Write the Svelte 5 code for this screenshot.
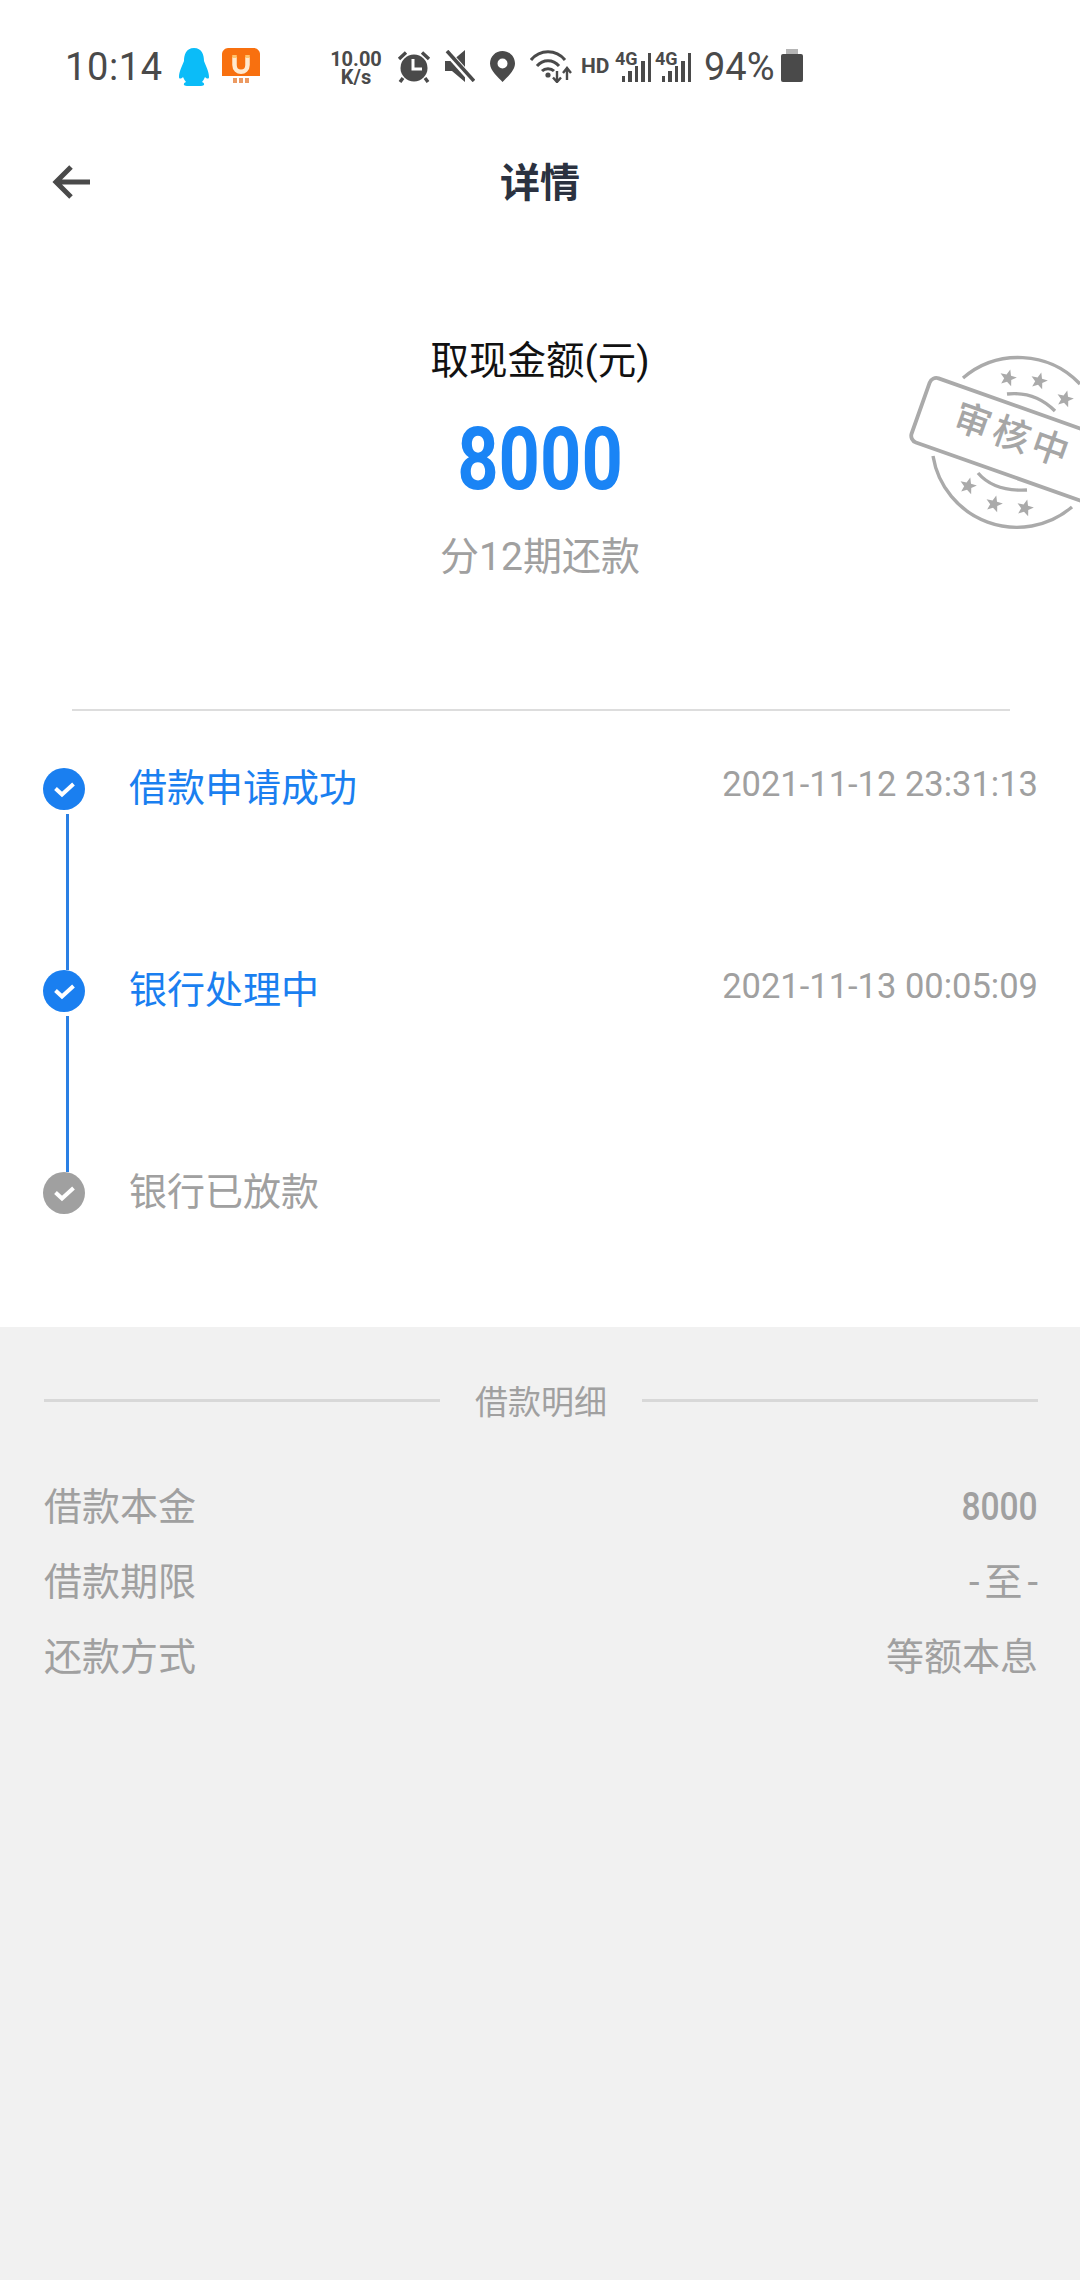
<script lang="ts">
  const steps = [
    { title: "借款申请成功", time: "2021-11-12 23:31:13", done: true },
    { title: "银行处理中", time: "2021-11-13 00:05:09", done: true },
    { title: "银行已放款", time: "", done: false },
  ];
  const rows = [
    { label: "借款本金", value: "8000", kind: "num" },
    { label: "借款期限", value: "-至-", kind: "wide" },
    { label: "还款方式", value: "等额本息", kind: "" },
  ];
  const bars = [6, 11, 16, 21, 29];
  const star = "M0 -13 L3.4 -4.4 L12.4 -4 L5.4 1.7 L7.6 10.5 L0 5.6 L-7.6 10.5 L-5.4 1.7 L-12.4 -4 L-3.4 -4.4 Z";
  const stars = [[1008, 378], [1039, 381], [1065, 399], [968, 486], [994, 504], [1025, 508]];
</script>

<div class="page">
  <div class="status">
    <span class="clock">10:14</span>
    <svg class="qq" width="32" height="38" viewBox="0 0 32 38">
      <path d="M16 0C8 0 6 7 6 13C4 18 1 24 1 29C1 31 3 31 5 29C6 31 7 33 8 34C5 35 5 38 9 38H13C15 38 17 38 19 38H23C27 38 27 35 24 34C25 33 26 31 27 29C29 31 31 31 31 29C31 24 28 18 26 13C26 7 24 0 16 0Z" fill="#0bbcf8"/>
    </svg>
    <svg class="shop" width="38" height="37" viewBox="0 0 38 37">
      <path d="M6 0H32C35 0 38 3 38 6V28H0V6C0 3 3 0 6 0Z" fill="#f8700f"/>
      <path d="M12.500 9V17C12.500 26 25.500 26 25.500 17V9" fill="none" stroke="#ffe9cf" stroke-width="4.500"/>
      <path d="M12.500 7V10M25.500 7V10" stroke="#ffc36e" stroke-width="4.500"/>
      <path d="M11 30h4v5h-4zM17 30h4v5h-4zM23 30h4v5h-4z" fill="#ec9a62"/>
    </svg>
    <div class="speed">10.00<br>K/s</div>
    <svg class="alarm" width="34" height="33" viewBox="0 0 34 33">
      <circle cx="17" cy="18" r="13.5" fill="#4a4a4a"/>
      <path d="M16 9V19H25" fill="none" stroke="#fff" stroke-width="3"/>
      <path d="M2 9L9 2.5M32 9L25 2.5M6 28L3 32M28 28L31 32" stroke="#4a4a4a" stroke-width="3.4" fill="none"/>
    </svg>
    <svg class="mute" width="30" height="32" viewBox="0 0 30 32">
      <path d="M0 11H7L20 0V32L7 21H0Z" fill="#4a4a4a"/>
      <path d="M1 1L28 31" stroke="#fff" stroke-width="7"/>
      <path d="M2 1L29 31" stroke="#4a4a4a" stroke-width="3.6"/>
    </svg>
    <svg class="pin" width="25" height="31" viewBox="0 0 25 31">
      <path fill-rule="evenodd" d="M12.5 0C19.5 0 25 5.500 25 12.500C25 20 16 27 12.500 31C9 27 0 20 0 12.500C0 5.500 5.500 0 12.500 0ZM12.500 7.500A5 5 0 1 0 12.510 17.500A5 5 0 1 0 12.500 7.500Z" fill="#4a4a4a"/>
    </svg>
    <svg class="wifi" width="42" height="33" viewBox="0 0 42 33">
      <g fill="none" stroke="#4a4a4a" stroke-width="3">
        <path d="M1 10C10 -1 26 -1 35 10"/>
        <path d="M7 16C13 9 23 9 29 16"/>
        <path d="M12 21C15 18 21 18 24 21"/>
      </g>
      <circle cx="18" cy="25" r="2.600" fill="#4a4a4a"/>
      <path d="M27 21V32M23 27.500L27 32L31 27.500M37 30V18M33 23L37 18L41 23" fill="none" stroke="#4a4a4a" stroke-width="2.400"/>
    </svg>
    <span class="hd">HD</span>
    {#each [0, 1] as s}
      <div class="signal">
        <span class="g">4G</span>
        {#each bars as b}<i style="height:{b}px"></i>{/each}
      </div>
    {/each}
    <span class="pct">94%</span>
    <svg class="batt" width="22" height="33" viewBox="0 0 22 33">
      <rect x="5" y="0" width="12" height="5" fill="#b5b5b5"/>
      <rect x="0" y="5" width="22" height="28" rx="2" fill="#4a4a4a"/>
    </svg>
  </div>

  <header class="nav">
    <svg width="44" height="44" viewBox="0 0 44 44">
      <path d="M42 22H8M23 7L8 22L23 37" fill="none" stroke="#4a4a4a" stroke-width="5"/>
    </svg>
    <h1>详情</h1>
  </header>

  <section class="summary">
    <p class="caption">取现金额(元)</p>
    <p class="amount"><span>8000</span></p>
    <p class="term">分12期还款</p>
    <svg class="stamp" width="200" height="210" viewBox="880 330 200 210">
      <g fill="none" stroke="#aaa" stroke-width="3.400">
        <path d="M963 378A85 85 0 0 1 1080 384"/>
        <path d="M933 456A85 85 0 0 0 1072 507"/>
        <path d="M1007 394C1025 392 1042 398 1055 411"/>
        <path d="M978 473C990 487 1008 491 1027 490"/>
      </g>
      <rect x="0" y="0" width="210" height="68" rx="7" transform="translate(932 376) rotate(19.500)" fill="#fff" stroke="#aaa" stroke-width="3.800"/>
      {#each stars as p}
        <path d={star} transform={`translate(${p[0]} ${p[1]}) rotate(15) scale(.68)`} fill="#aaa"/>
      {/each}
      <text x="951" y="427" transform="rotate(19.500 951 427)" class="stamp-text">审核中</text>
    </svg>
  </section>

  <div class="rule"></div>

  <section class="timeline">
    {#each steps as step, i}
      <div class="step">
        <div class="node">
          <svg width="42" height="42" viewBox="0 0 42 42">
            <circle cx="21" cy="21" r="21" fill={step.done ? "#1a7ff0" : "#a0a0a0"}/>
            <path d="M12.500 20.500L19 26.500L30.500 16" fill="none" stroke="#fff" stroke-width="4"/>
          </svg>
          {#if i < steps.length - 1}<span class="link"></span>{/if}
        </div>
        <span class="title" class:done={step.done}>{step.title}</span>
        <span class="time">{step.time}</span>
      </div>
    {/each}
  </section>

  <section class="detail">
    <div class="detail-head"><span></span><b>借款明细</b><span></span></div>
    {#each rows as row}
      <div class="row">
        <span>{row.label}</span>
        <span class={row.kind}>{row.value}</span>
      </div>
    {/each}
  </section>
</div>

<style>
  :global(body) {
    margin: 0;
    background: #fff;
  }

  .page {
    width: 1080px;
    height: 2280px;
    overflow: hidden;
    display: flex;
    flex-direction: column;
    font-family: Roboto, "Noto Sans CJK SC", sans-serif;
    color: #a0a0a0;
    position: relative;
  }

  .status {
    height: 132px;
    flex: none;
    display: flex;
    align-items: flex-start;
    box-sizing: border-box;
    padding: 48px 0 0 65px;
    color: #4a4a4a;
  }
  .status svg { flex: none; display: block; }
  .clock { font-size: 38px; line-height: 38px; width: 113px; letter-spacing: 0.6px; }
  .shop { margin-left: 12px; }
  .speed {
    width: 56px;
    margin-left: 68px;
    text-align: center;
    font-size: 20px;
    line-height: 18px;
    font-weight: 700;
    margin-top: 2px;
  }
  .alarm { margin-left: 13px; margin-top: 2px; }
  .mute { margin-left: 14px; margin-top: 2px; }
  .pin { margin-left: 15px; margin-top: 3px; }
  .wifi { margin-left: 15px; margin-top: 2px; }
  .hd { font-size: 21px; line-height: 21px; font-weight: 700; margin-left: 9px; margin-top: 8px; width: 32px; }
  .signal {
    width: 36px;
    height: 34px;
    margin-left: 2px;
    display: flex;
    align-items: flex-end;
    justify-content: flex-end;
    gap: 3px;
    position: relative;
  }
  .signal i { width: 3.500px; background: #4a4a4a; display: block; }
  .g {
    position: absolute;
    left: 0;
    top: 2px;
    font-size: 18px;
    line-height: 18px;
    font-weight: 700;
  }
  .signal + .signal { margin-left: 4px; }
  .pct { font-size: 38px; line-height: 38px; margin-left: 13px; width: 76px; }
  .batt { margin-top: 1px; margin-left: 1px; }

  .nav {
    height: 100px;
    flex: none;
    position: relative;
    display: flex;
    align-items: center;
    justify-content: center;
  }
  .nav svg { position: absolute; left: 48px; top: 28px; }
  h1 {
    margin: 3px 0 0;
    font-size: 40px;
    font-weight: 700;
    color: #2b3240;
    line-height: 100px;
  }

  .summary {
    flex: none;
    height: 477px;
    box-sizing: border-box;
    padding-top: 106px;
    display: flex;
    flex-direction: column;
    align-items: center;
    position: relative;
  }
  .summary p { margin: 0; }
  .caption { font-size: 38.5px; line-height: 46px; color: #111; }
  .amount { font-size: 88px; line-height: 90px; font-weight: 700; color: #1a84f5; margin-top: 30px !important; }
  .amount span { display: inline-block; transform: scaleX(.82); }
  .term { font-size: 39px; line-height: 46px; margin-top: 30px !important; }
  .stamp { position: absolute; top: 98px; right: 0; }
  .stamp-text { font-size: 37px; font-weight: 500; fill: #a6a6a6; font-family: "Noto Sans CJK SC", sans-serif; letter-spacing: 4px; }

  .rule { height: 2px; margin: 0 70px 0 72px; background: #ddd; flex: none; }

  .timeline {
    flex: none;
    height: 616px;
    box-sizing: border-box;
    padding: 57px 42px 0 43px;
    display: flex;
    flex-direction: column;
  }
  .step { height: 202px; flex: none; display: flex; align-items: flex-start; }
  .node { width: 42px; flex: none; display: flex; flex-direction: column; }
  .node svg { display: block; flex: none; }
  .link { display: block; width: 3px; height: 156px; margin: 4px 0 0 23px; background: #2a80e4; }
  .title { margin: -1px 0 0 44px; font-size: 38px; line-height: 42px; color: #a0a0a0; }
  .title.done { color: #1a7ff0; }
  .time { margin: -1px 0 0 auto; font-size: 34.5px; line-height: 34px; }

  .detail {
    flex: 1;
    background: #f1f1f1;
    box-sizing: border-box;
    padding: 53px 42px 0 44px;
    display: flex;
    flex-direction: column;
  }
  .detail-head { display: flex; align-items: center; gap: 35px; height: 40px; margin-bottom: 62px; }
  .detail-head span { flex: 1; height: 3px; background: #d8d8d8; }
  .detail-head b { font-size: 33px; font-weight: 400; }
  .row { display: flex; justify-content: space-between; height: 75px; font-size: 38px; line-height: 50px; }
  .num { font-size: 39px; font-weight: 500; display: inline-block; transform: scaleX(.86); transform-origin: right center; }
  .wide { letter-spacing: 5px; margin-right: -5px; }
</style>
